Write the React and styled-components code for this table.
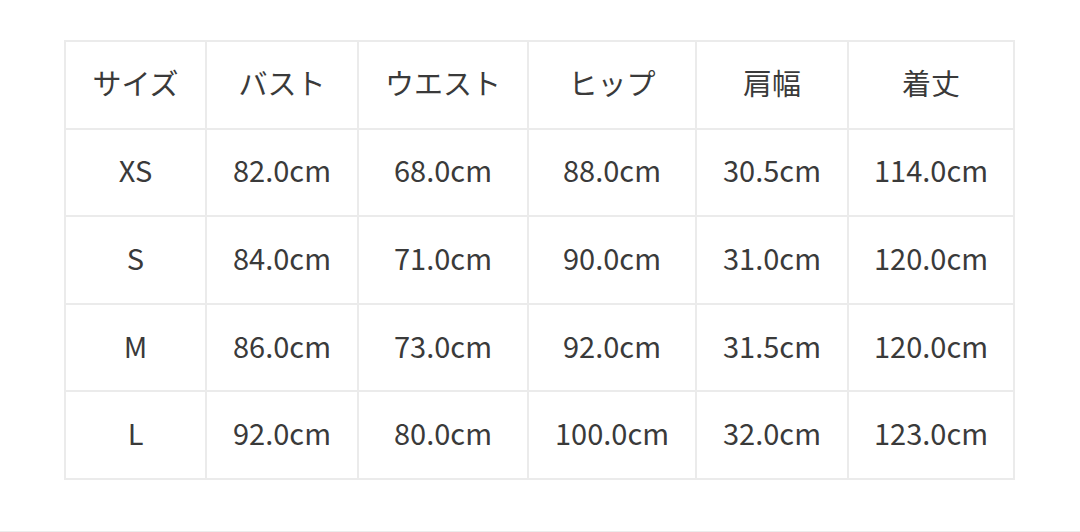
import React from 'react';
import styled, { createGlobalStyle } from 'styled-components';

const GlobalStyle = createGlobalStyle`
  html, body {
    margin: 0;
    padding: 0;
    background: #ffffff;
  }
  body {
    font-family: "Noto Sans CJK JP", "Noto Sans", sans-serif;
  }
`;

const Page = styled.div`
  box-sizing: border-box;
  height: 532px;
  padding: 40px 0 0 64px;
  border-bottom: 1px solid #ececec;
`;

const SizeTable = styled.table`
  border-collapse: collapse;
  table-layout: fixed;
  width: 949px;
  color: #3a3a3a;
  font-size: 29px;
`;

// row pitch in the picture is about 87.6px: 79.6 + 6 padding + 2 border
const HeadCell = styled.th`
  height: 79.6px;
  padding: 0 0 6px;
  border: 2px solid #ebebeb;
  font-weight: 400;
  text-align: center;
  vertical-align: middle;
`;

const Cell = styled.td`
  height: 79.6px;
  padding: 0 0 6px;
  border: 2px solid #ebebeb;
  text-align: center;
  vertical-align: middle;
`;

const columns = [
  { label: 'サイズ', width: 141 },
  { label: 'バスト', width: 152 },
  { label: 'ウエスト', width: 170 },
  { label: 'ヒップ', width: 168 },
  { label: '肩幅', width: 152 },
  { label: '着丈', width: 166 },
];

const rows = [
  ['XS', '82.0cm', '68.0cm', '88.0cm', '30.5cm', '114.0cm'],
  ['S', '84.0cm', '71.0cm', '90.0cm', '31.0cm', '120.0cm'],
  ['M', '86.0cm', '73.0cm', '92.0cm', '31.5cm', '120.0cm'],
  ['L', '92.0cm', '80.0cm', '100.0cm', '32.0cm', '123.0cm'],
];

export default function App() {
  return (
    <>
      <GlobalStyle />
      <Page>
        <SizeTable>
          <colgroup>
            {columns.map((c) => (
              <col key={c.label} style={{ width: c.width }} />
            ))}
          </colgroup>
          <thead>
            <tr>
              {columns.map((c) => (
                <HeadCell key={c.label}>{c.label}</HeadCell>
              ))}
            </tr>
          </thead>
          <tbody>
            {rows.map((row) => (
              <tr key={row[0]}>
                {row.map((value, i) => (
                  <Cell key={i}>{value}</Cell>
                ))}
              </tr>
            ))}
          </tbody>
        </SizeTable>
      </Page>
    </>
  );
}
